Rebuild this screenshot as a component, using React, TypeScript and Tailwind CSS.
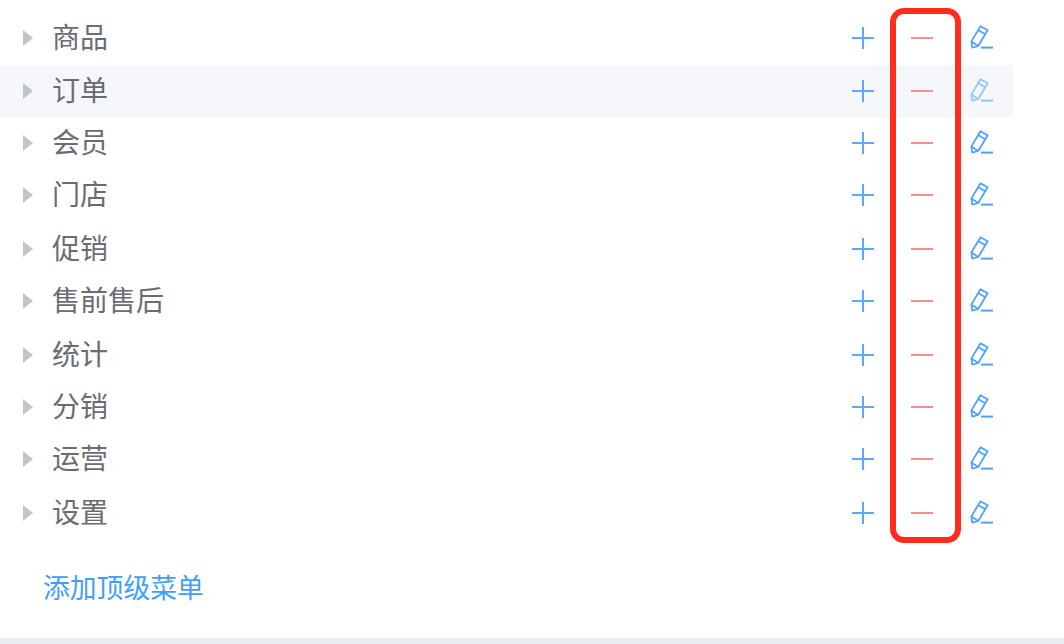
import React from 'react';

const rows = [
  { label: '商品', gap: 'mt-0' },
  { label: '订单', gap: 'mt-px', active: true },
  { label: '会员', gap: 'mt-0' },
  { label: '门店', gap: 'mt-0' },
  { label: '促销', gap: 'mt-[2px]' },
  { label: '售前售后', gap: 'mt-0' },
  { label: '统计', gap: 'mt-[2px]' },
  { label: '分销', gap: 'mt-0' },
  { label: '运营', gap: 'mt-0' },
  { label: '设置', gap: 'mt-[2px]' },
];

const PlusIcon = () => (
  <svg width="22" height="22" viewBox="0 0 22 22" fill="none" stroke="#5aa9fb" strokeWidth="2">
    <path d="M0 11H22M11 0V22" />
  </svg>
);

const MinusIcon = () => (
  <svg width="22" height="22" viewBox="0 0 22 22" fill="none" stroke="#f78f8f" strokeWidth="2">
    <path d="M0 11H22" />
  </svg>
);

const EditIcon = ({ light }: { light?: boolean }) => (
  <svg className="mb-[2px]" width="24" height="24" viewBox="0 0 24 24" fill="none" stroke={light ? '#93c8fd' : '#4ea3fb'} strokeWidth="1.8" strokeLinejoin="round">
    <path d="M10.5 1.2L17.6 5.3L8.2 21L2.2 22.6L1.4 16.4Z" />
    <path d="M8 5L15.2 9.3M1.4 16.4L8.2 21" />
    <path d="M11 22.6H23" strokeWidth="2" />
  </svg>
);

export default function App() {
  return (
    <div
      className="relative flex h-[644px] w-[1064px] flex-col overflow-hidden bg-white pt-[12px]"
      style={{ fontFamily: '"Noto Sans CJK SC", "Noto Sans", sans-serif' }}
    >
      {rows.map((row) => (
        <div
          key={row.label}
          className={`flex h-[52px] w-[1013px] shrink-0 items-center pl-[23px] pr-[19px] ${row.gap} ${row.active ? 'bg-[#f5f7fa]' : ''}`}
        >
          <span className="mr-[19px] h-0 w-0 border-y-[8px] border-l-[10px] border-y-transparent border-l-[#c0c4cc]" />
          <span className="mb-[4px] flex-1 text-[28px] font-normal leading-none text-[#6a6c71]">{row.label}</span>
          <div className="flex items-center">
            <PlusIcon />
            <div className="ml-[37px] mr-[37px]">
              <MinusIcon />
            </div>
            <EditIcon light={row.active} />
          </div>
        </div>
      ))}

      <div className="ml-[43px] mt-[28px] text-[26.8px] leading-[40px] text-[#409eff]">添加顶级菜单</div>

      <div className="mt-auto h-[6px] shrink-0 bg-[#ebeef2]" />

      {/* red annotation box */}
      <div className="absolute left-[890px] top-[8px] h-[535px] w-[71px] rounded-[14px] border-[6px] border-[#ff2d1f]" />
    </div>
  );
}
